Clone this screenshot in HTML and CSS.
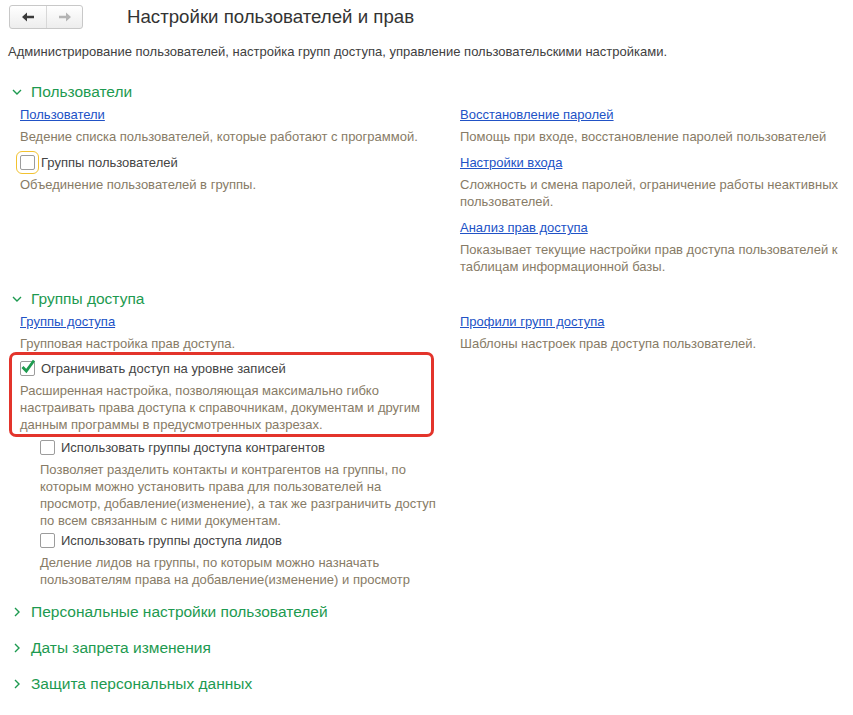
FILE: index.html
```html
<!DOCTYPE html>
<html lang="ru">
<head>
    <meta charset="UTF-8">
    <title>Настройки пользователей и прав</title>
    <link rel="stylesheet" href="styles.css">
</head>
<body>

<div class="page">
    <div class="topbar">
        <div class="nav">
            <button class="nav-btn">
                <svg width="12" height="10" viewBox="0 0 12 10"><path d="M0 5 L5 0.5 L5 3.8 L12 3.8 L12 6.2 L5 6.2 L5 9.5 Z" fill="#3a3a3a"/></svg>
            </button>
            <button class="nav-btn">
                <svg width="12" height="10" viewBox="0 0 12 10"><path d="M12 5 L7 0.5 L7 3.8 L0 3.8 L0 6.2 L7 6.2 L7 9.5 Z" fill="#b4b4b4"/></svg>
            </button>
        </div>
        <h1 class="title">Настройки пользователей и прав</h1>
    </div>

    <p class="intro">Администрирование пользователей, настройка групп доступа, управление пользовательскими настройками.</p>

    <!-- Пользователи -->
    <section class="group">
        <h2 class="group-head">
            <svg width="10" height="10" viewBox="0 0 10 10"><path d="M1 3 L5 7 L9 3" fill="none" stroke="#1d9a50" stroke-width="1.4"/></svg>
            Пользователи
        </h2>
        <div class="group-body">
            <div class="col">
                <div class="item">
                    <div class="item-title"><a href="#" class="link">Пользователи</a></div>
                    <p class="note">Ведение списка пользователей, которые работают с программой.</p>
                </div>
                <div class="item">
                    <label class="item-title check"><span class="box focused"></span>Группы пользователей</label>
                    <p class="note">Объединение пользователей в группы.</p>
                </div>
            </div>
            <div class="col">
                <div class="item">
                    <div class="item-title"><a href="#" class="link">Восстановление паролей</a></div>
                    <p class="note">Помощь при входе, восстановление паролей пользователей</p>
                </div>
                <div class="item">
                    <div class="item-title"><a href="#" class="link">Настройки входа</a></div>
                    <p class="note">Сложность и смена паролей, ограничение работы неактивных пользователей.</p>
                </div>
                <div class="item">
                    <div class="item-title"><a href="#" class="link">Анализ прав доступа</a></div>
                    <p class="note">Показывает текущие настройки прав доступа пользователей к таблицам информационной базы.</p>
                </div>
            </div>
        </div>
    </section>

    <!-- Группы доступа -->
    <section class="group">
        <h2 class="group-head">
            <svg width="10" height="10" viewBox="0 0 10 10"><path d="M1 3 L5 7 L9 3" fill="none" stroke="#1d9a50" stroke-width="1.4"/></svg>
            Группы доступа
        </h2>
        <div class="group-body">
            <div class="col">
                <div class="item">
                    <div class="item-title"><a href="#" class="link">Группы доступа</a></div>
                    <p class="note">Групповая настройка прав доступа.</p>
                </div>
                <div class="item marked">
                    <label class="item-title check">
                        <span class="box checked">
                            <svg width="18" height="18" viewBox="0 0 18 18"><path d="M3.5 9 L7.3 13 L15 2.5" fill="none" stroke="#1e9b4f" stroke-width="2.8"/></svg>
                        </span>Ограничивать доступ на уровне записей
                    </label>
                    <p class="note">Расширенная настройка, позволяющая максимально гибко настраивать права доступа к справочникам, документам и другим данным программы в предусмотренных разрезах.</p>
                </div>
                <div class="sub">
                    <div class="item">
                        <label class="item-title check"><span class="box"></span>Использовать группы доступа контрагентов</label>
                        <p class="note">Позволяет разделить контакты и контрагентов на группы, по которым можно установить права для пользователей на просмотр, добавление(изменение), а так же разграничить доступ по всем связанным с ними документам.</p>
                    </div>
                    <div class="item">
                        <label class="item-title check"><span class="box"></span>Использовать группы доступа лидов</label>
                        <p class="note">Деление лидов на группы, по которым можно назначать пользователям права на добавление(изменение) и просмотр</p>
                    </div>
                </div>
            </div>
            <div class="col">
                <div class="item">
                    <div class="item-title"><a href="#" class="link">Профили групп доступа</a></div>
                    <p class="note">Шаблоны настроек прав доступа пользователей.</p>
                </div>
            </div>
        </div>
    </section>

    <!-- Свернутые группы -->
    <section class="group">
        <h2 class="group-head">
            <svg width="10" height="10" viewBox="0 0 10 10"><path d="M3 1 L7 5 L3 9" fill="none" stroke="#1d9a50" stroke-width="1.4"/></svg>
            Персональные настройки пользователей
        </h2>
    </section>
    <section class="group">
        <h2 class="group-head">
            <svg width="10" height="10" viewBox="0 0 10 10"><path d="M3 1 L7 5 L3 9" fill="none" stroke="#1d9a50" stroke-width="1.4"/></svg>
            Даты запрета изменения
        </h2>
    </section>
    <section class="group">
        <h2 class="group-head">
            <svg width="10" height="10" viewBox="0 0 10 10"><path d="M3 1 L7 5 L3 9" fill="none" stroke="#1d9a50" stroke-width="1.4"/></svg>
            Защита персональных данных
        </h2>
    </section>
</div>

</body>
</html>
```

FILE: styles.css
```css
/* General Styles */
body {
    margin: 0;
    font-family: "Liberation Sans", Arial, sans-serif;
    font-size: 13px;
    color: #404040;
    background-color: #ffffff;
}

.page {
    padding: 5px 8px;
}

/* Top bar */
.topbar {
    display: flex;
    align-items: center;
    height: 24px;
}

.nav {
    display: flex;
    height: 22px;
    margin-left: 1px;
    border: 1px solid #c8c8c8;
    border-radius: 3px;
    background: linear-gradient(#ffffff, #ededed);
}

.nav-btn {
    display: flex;
    align-items: center;
    justify-content: center;
    width: 36px;
    padding: 0;
    border: 0;
    background: transparent;
}

.nav-btn + .nav-btn {
    border-left: 1px solid #d8d8d8;
}

.title {
    margin: 0 0 0 44px;
    font-size: 18.67px;
    font-weight: normal;
    color: #333;
}

.intro {
    margin: 15px 0 20px;
    line-height: 16px;
    color: #404040;
}

/* Groups */
.group {
    margin-bottom: 12px;
}

.group-head {
    display: flex;
    align-items: center;
    gap: 9px;
    height: 24px;
    margin: 0;
    padding-left: 4px;
    font-size: 15.5px;
    font-weight: normal;
    color: #1d9a50;
}

.group-body {
    display: grid;
    grid-template-columns: 418px 1fr;
    column-gap: 22px;
    padding-left: 12px;
}

.item + .item {
    margin-top: 7px;
}

.item-title {
    display: flex;
    align-items: center;
    height: 21px;
    line-height: 21px;
}

.link {
    color: #2152c6;
    text-decoration: underline;
}

.note {
    margin: 3px 0 0;
    line-height: 17px;
    color: #877b66;
}

/* Checkboxes */
.check {
    color: #444;
}

.box {
    position: relative;
    box-sizing: border-box;
    width: 15px;
    height: 15px;
    margin-right: 6px;
    border: 1px solid #9c9c9c;
    border-radius: 2px;
    background-color: #ffffff;
}

.box.focused {
    outline: 1px solid #f2c230;
    outline-offset: 3px;
}

.box.checked svg {
    position: absolute;
    left: -2px;
    top: -4px;
}

/* Highlighted option */
.item.marked {
    margin: 0 4px 0 -11px;
    padding: 3px 4px 1px 8px;
    border: 3px solid #e3342b;
    border-radius: 7px;
}

.sub {
    padding-left: 20px;
}

.sub .item + .item {
    margin-top: 1px;
}
```
